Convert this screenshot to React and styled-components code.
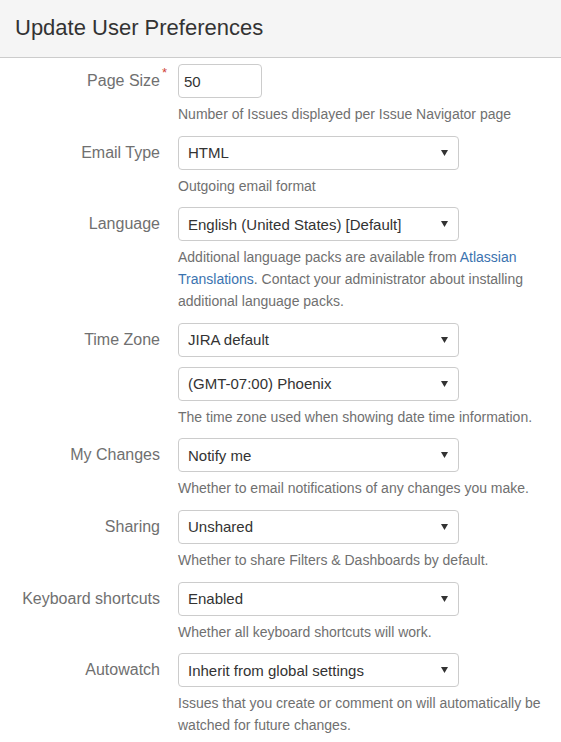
import React from "react";
import styled, { createGlobalStyle } from "styled-components";

const Global = createGlobalStyle`
  html, body { margin: 0; padding: 0; background: #fff; }
  body { font-family: "Liberation Sans", Arial, sans-serif; color: #333; }
`;

const Page = styled.div`
  width: 561px;
`;

const Header = styled.header`
  height: 57px;
  display: flex;
  align-items: center;
  padding: 0 15px;
  background: #f5f5f5;
  border-bottom: 1px solid #cccccc;
`;

const Title = styled.h1`
  margin: 0;
  font-size: 22px;
  font-weight: normal;
  color: #333;
  line-height: 1;
  padding-bottom: 2px;
`;

const Form = styled.form`
  padding: 6px 10px 10px 0;
`;

const Field = styled.div`
  display: grid;
  grid-template-columns: 160px 1fr;
  column-gap: 18px;
  margin-bottom: 10.6px;
`;

const Label = styled.label`
  position: relative;
  text-align: right;
  font-size: 16px;
  line-height: 33px;
  color: #707070;
  white-space: nowrap;
`;

const Required = styled.span`
  position: absolute;
  right: -7px;
  top: 2px;
  font-size: 13px;
  line-height: 13px;
  color: #d04437;
`;

const Controls = styled.div`
  display: flex;
  flex-direction: column;
  gap: 10px;
  min-width: 0;
`;

const TextInput = styled.div`
  box-sizing: border-box;
  width: 84px;
  height: 34px;
  border: 1px solid #cccccc;
  border-radius: 4px;
  padding: 0 5px;
  display: flex;
  align-items: center;
  font-size: 15px;
  color: #333;
  background: #fff;
`;

const Select = styled.div`
  box-sizing: border-box;
  width: 281px;
  height: 34px;
  border: 1px solid #cccccc;
  border-radius: 4px;
  padding: 0 9px 0 9px;
  display: flex;
  align-items: center;
  justify-content: space-between;
  font-size: 15px;
  color: #333;
  background: #fff;
`;

const Arrow = styled.svg`
  width: 7px;
  height: 6px;
  flex: none;
  margin-right: 1px;
`;

const Description = styled.div`
  grid-column: 2;
  margin-top: 5px;
  font-size: 14px;
  line-height: 22px;
  color: #707070;
`;

const Link = styled.a`
  color: #3b73af;
  text-decoration: none;
`;

function Dropdown({ value }) {
  return (
    <Select>
      <span>{value}</span>
      <Arrow viewBox="0 0 7 6">
        <path d="M0 0 H7 L3.5 6 Z" fill="#333" />
      </Arrow>
    </Select>
  );
}

function Row({ label, required, children, description }) {
  return (
    <Field>
      <Label>
        {label}
        {required && <Required>*</Required>}
      </Label>
      <Controls>{children}</Controls>
      <Description>{description}</Description>
    </Field>
  );
}

export default function App() {
  return (
    <Page>
      <Global />
      <Header>
        <Title>Update User Preferences</Title>
      </Header>
      <Form>
        <Row
          label="Page Size"
          required
          description="Number of Issues displayed per Issue Navigator page"
        >
          <TextInput>50</TextInput>
        </Row>
        <Row label="Email Type" description="Outgoing email format">
          <Dropdown value="HTML" />
        </Row>
        <Row
          label="Language"
          description={
            <>
              Additional language packs are available from{" "}
              <Link href="#">Atlassian Translations</Link>. Contact your
              administrator about installing additional language packs.
            </>
          }
        >
          <Dropdown value="English (United States) [Default]" />
        </Row>
        <Row
          label="Time Zone"
          description="The time zone used when showing date time information."
        >
          <Dropdown value="JIRA default" />
          <Dropdown value="(GMT-07:00) Phoenix" />
        </Row>
        <Row
          label="My Changes"
          description="Whether to email notifications of any changes you make."
        >
          <Dropdown value="Notify me" />
        </Row>
        <Row
          label="Sharing"
          description="Whether to share Filters & Dashboards by default."
        >
          <Dropdown value="Unshared" />
        </Row>
        <Row
          label="Keyboard shortcuts"
          description="Whether all keyboard shortcuts will work."
        >
          <Dropdown value="Enabled" />
        </Row>
        <Row
          label="Autowatch"
          description="Issues that you create or comment on will automatically be watched for future changes."
        >
          <Dropdown value="Inherit from global settings" />
        </Row>
      </Form>
    </Page>
  );
}
